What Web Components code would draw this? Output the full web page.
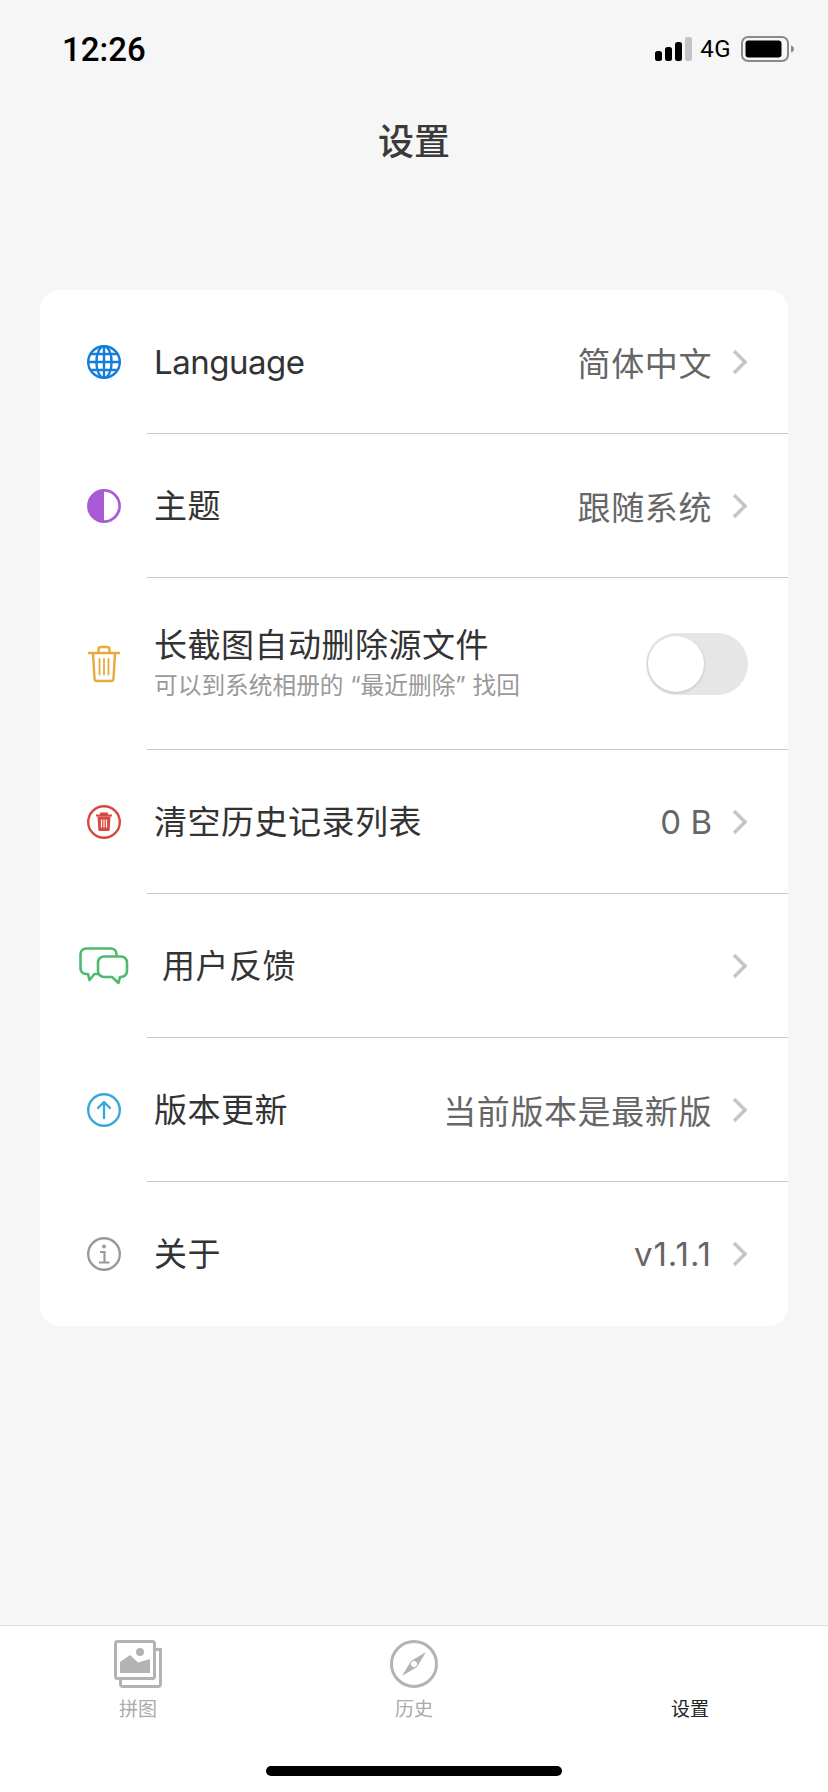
<!DOCTYPE html>
<html lang="zh">
<head>
<meta charset="utf-8">
<title>设置</title>
<style>
    html, body{
        margin: 0;
        background-color: #f6f6f7;
    }
    body{
        font-family: Inter, "Noto Sans CJK SC", sans-serif;
    }
</style>
</head>
<body>

<app-shell>
    <status-bar></status-bar>
    <page-title>设置</page-title>
    <settings-card>
        <setting-row label="Language" value="简体中文" chevron style="--label-spacing: -.5px">
            <svg slot="icon" width="36" height="36" viewBox="0 0 36 36" fill="none" stroke="#127fd8" stroke-width="2.4">
                <circle cx="18" cy="18" r="15.8"/>
                <ellipse cx="18" cy="18" rx="7.6" ry="15.8"/>
                <path d="M18 2v32M2.2 18h31.6M4.6 10h26.8M4.6 26h26.8"/>
            </svg>
        </setting-row>
        <setting-row label="主题" value="跟随系统" chevron>
            <svg slot="icon" width="36" height="36" viewBox="0 0 36 36">
                <circle cx="18" cy="18" r="15.6" fill="#fff" stroke="#a95bd6" stroke-width="2.6"/>
                <path d="M18 2a16 16 0 0 0 0 32z" fill="#a95bd6"/>
            </svg>
        </setting-row>
        <setting-row label="长截图自动删除源文件" sub="可以到系统相册的 “最近删除” 找回" tall>
            <svg slot="icon" width="34" height="38" viewBox="0 0 34 38" fill="none" stroke="#e9a93c" stroke-width="2.4" stroke-linecap="round" stroke-linejoin="round">
                <path d="M2 8h30M11.500 8V4.500a2.500 2.500 0 0 1 2.500-2.500h6a2.500 2.500 0 0 1 2.500 2.500V8"/>
                <path d="M6 8l1.500 25.500a2.500 2.500 0 0 0 2.500 2.500h14a2.500 2.500 0 0 0 2.500-2.500L28 8"/>
                <path d="M12.500 14v15.500M17 14v15.500M21.500 14v15.500" stroke-width="1.800"/>
            </svg>
            <toggle-switch slot="control"></toggle-switch>
        </setting-row>
        <setting-row label="清空历史记录列表" value="0 B" chevron style="--value-spacing: 0">
            <svg slot="icon" width="36" height="36" viewBox="0 0 36 36" fill="none">
                <circle cx="18" cy="18" r="15.800" stroke="#d8483f" stroke-width="2.400"/>
                <path d="M10 11.500h16M15 11.500V9.500h6v2" stroke="#d8483f" stroke-width="1.800"/>
                <path d="M11.500 12.500h13l-.8 13a1.500 1.500 0 0 1-1.500 1.500h-8.400a1.500 1.500 0 0 1-1.500-1.500z" fill="#d8483f"/>
                <path d="M15.500 15.500v8M18 15.500v8M20.500 15.500v8" stroke="#fff" stroke-width="1.200"/>
            </svg>
        </setting-row>
        <setting-row label="用户反馈" chevron indent>
            <svg slot="icon" width="50" height="38" viewBox="0 0 50 38" fill="none" stroke="#4dba6d" stroke-width="2.600" stroke-linejoin="round">
                <path d="M20 27H15.500L10.500 33 9 27H7a5.500 5.500 0 0 1-5.500-5.500V7A5.500 5.500 0 0 1 7 1.500H32A5.500 5.500 0 0 1 37.500 7V9.500"/>
                <path d="M25 9.500H42a6 6 0 0 1 6 6V24a6 6 0 0 1-6 6H41L39.500 36 33 30H25a6 6 0 0 1-6-6V15.500a6 6 0 0 1 6-6z"/>
            </svg>
        </setting-row>
        <setting-row label="版本更新" value="当前版本是最新版" chevron>
            <svg slot="icon" width="36" height="36" viewBox="0 0 36 36" fill="none" stroke="#3aa7da" stroke-width="2.400" stroke-linecap="round" stroke-linejoin="round">
                <circle cx="18" cy="18" r="15.800"/>
                <path d="M18 26V10.500M12 16l6-6 6 6"/>
            </svg>
        </setting-row>
        <setting-row label="关于" value="v1.1.1" chevron style="--value-spacing: 1px">
            <svg slot="icon" width="36" height="36" viewBox="0 0 36 36" fill="none" stroke="#999" stroke-width="2.400">
                <circle cx="18" cy="18" r="15.800"/>
                <circle cx="18" cy="10.500" r="1.900" fill="#999" stroke="none"/>
                <path d="M14 16h4.500v10M13 26.500h10.500" stroke-width="2.200"/>
            </svg>
        </setting-row>
    </settings-card>
    <tab-bar>
        <tab-item label="拼图">
            <svg width="48" height="48" viewBox="0 0 48 48" fill="none">
                <path d="M41 9.500h5.500V45a2 2 0 0 1-2 1.500H8.500a2 2 0 0 1-2-1.500V40" stroke="#b3b3b3" stroke-width="3"/>
                <rect x="1.500" y="1.500" width="39" height="37" rx="2" fill="#fff" stroke="#b3b3b3" stroke-width="3"/>
                <path d="M6 33V22L16 15l8 7.500L36 19V33z" fill="#b3b3b3"/>
                <circle cx="26" cy="12" r="4" fill="#b3b3b3"/>
            </svg>
        </tab-item>
        <tab-item label="历史">
            <svg width="48" height="48" viewBox="0 0 48 48" fill="none">
                <circle cx="24" cy="24" r="22.500" stroke="#b3b3b3" stroke-width="3"/>
                <path d="M36 12L27 27 12 36l9-15z" fill="#b3b3b3"/>
                <circle cx="24" cy="24" r="3" fill="#fff"/>
            </svg>
        </tab-item>
        <tab-item label="设置" active></tab-item>
    </tab-bar>
</app-shell>

<script>
const shellTemplate = document.createElement('template')
shellTemplate.innerHTML = `
    <style>
        :host{
            display: flex;
            flex-direction: column;
            height: 1792px;
            overflow: hidden;
        }
    </style>
    <slot></slot>
`

class AppShell extends HTMLElement {
    constructor(){
        super()
        this.attachShadow({mode: 'open'}).appendChild(shellTemplate.content.cloneNode(true))
    }
}

const statusTemplate = document.createElement('template')
statusTemplate.innerHTML = `
    <style>
        :host{
            display: flex;
            align-items: center;
            justify-content: space-between;
            height: 98px;
            padding: 0 34px 0 62px;
            box-sizing: border-box;
            color: #000;
            font-family: Roboto, sans-serif;
        }
        .time{
            font-size: 33px;
            font-weight: 500;
        }
        .right{
            display: flex;
            align-items: center;
        }
        .net{
            font-size: 24px;
            letter-spacing: .5px;
            margin: 0 10px 0 8px;
        }
        svg{
            display: block;
        }
    </style>
    <span class="time">12:26</span>
    <div class="right">
        <svg width="37" height="24" viewBox="0 0 37 24">
            <rect x="0" y="14" width="7" height="10" rx="2.500"/>
            <rect x="10" y="10" width="7" height="14" rx="2.500"/>
            <rect x="20" y="5" width="7" height="19" rx="2.500"/>
            <rect x="30" y="0" width="7" height="24" rx="2" fill="#c4c4c4"/>
        </svg>
        <span class="net">4G</span>
        <svg width="53" height="26" viewBox="0 0 53 26">
            <rect x="1" y="1" width="46" height="24" rx="6" fill="none" stroke="#8a8a8a" stroke-width="2"/>
            <rect x="4.500" y="4.500" width="36" height="17" rx="3"/>
            <path d="M50 9.500c2 .5 3 2 3 3.500s-1 3-3 3.500z" fill="#8a8a8a"/>
        </svg>
    </div>
`

class StatusBar extends HTMLElement {
    constructor(){
        super()
        this.attachShadow({mode: 'open'}).appendChild(statusTemplate.content.cloneNode(true))
    }
}

const titleTemplate = document.createElement('template')
titleTemplate.innerHTML = `
    <style>
        :host{
            display: flex;
            align-items: center;
            justify-content: center;
            height: 88px;
            padding-bottom: 7px;
            box-sizing: border-box;
            flex: none;
            color: #3a3a3a;
            font-size: 36px;
            font-weight: 500;
        }
    </style>
    <slot></slot>
`

class PageTitle extends HTMLElement {
    constructor(){
        super()
        this.attachShadow({mode: 'open'}).appendChild(titleTemplate.content.cloneNode(true))
    }
}

const cardTemplate = document.createElement('template')
cardTemplate.innerHTML = `
    <style>
        :host{
            display: block;
            margin: 104px 40px 0;
            background-color: #fff;
            border-radius: 20px;
            overflow: hidden;
        }
    </style>
    <slot></slot>
`

class SettingsCard extends HTMLElement {
    constructor(){
        super()
        this.attachShadow({mode: 'open'}).appendChild(cardTemplate.content.cloneNode(true))
    }
}

const rowTemplate = document.createElement('template')
rowTemplate.innerHTML = `
    <style>
        :host{
            display: flex;
            height: 144px;
            color: #333;
        }
        :host([tall]){
            height: 172px;
        }
        :host(:last-child) .main{
            border-bottom: none;
        }
        .icon{
            flex: none;
            width: 107px;
            padding-left: 24px;
            box-sizing: border-box;
        }
        .icon-box{
            display: flex;
            align-items: center;
            justify-content: center;
            width: 80px;
            height: 100%;
        }
        .main{
            flex: 1;
            display: flex;
            align-items: center;
            min-width: 0;
            padding: 0 40px 0 7px;
            border-bottom: 1px solid #c9c9cb;
        }
        :host([indent]) .text{
            padding-left: 8px;
        }
        .text{
            flex: 1;
            min-width: 0;
        }
        .label{
            font-size: 33px;
            line-height: 44px;
            letter-spacing: var(--label-spacing, .5px);
            white-space: nowrap;
        }
        .sub{
            font-size: 23.700px;
            line-height: 32px;
            color: #999;
            white-space: nowrap;
            margin-top: 3px;
            padding-bottom: 3px;
        }
        .value{
            font-size: 33px;
            color: #666;
            letter-spacing: var(--value-spacing, .6px);
            white-space: nowrap;
        }
        .chevron{
            display: block;
            flex: none;
            margin-left: 20px;
        }
    </style>
    <div class="icon"><div class="icon-box"><slot name="icon"></slot></div></div>
    <div class="main">
        <div class="text">
            <div class="label"></div>
        </div>
    </div>
`

class SettingRow extends HTMLElement {
    constructor(){
        super()
        this._shadowRoot = this.attachShadow({mode: 'open'})
        this._shadowRoot.appendChild(rowTemplate.content.cloneNode(true))

        this.$main = this._shadowRoot.querySelector('.main')
        this.$text = this._shadowRoot.querySelector('.text')
        this.$label = this._shadowRoot.querySelector('.label')
    }

    connectedCallback(){
        this.$label.textContent = this.getAttribute('label')

        if(this.hasAttribute('sub')){
            const sub = document.createElement('div')
            sub.className = 'sub'
            sub.textContent = this.getAttribute('sub')
            this.$text.appendChild(sub)
        }
        if(this.hasAttribute('value')){
            const value = document.createElement('span')
            value.className = 'value'
            value.textContent = this.getAttribute('value')
            this.$main.appendChild(value)
        }
        if(this.hasAttribute('chevron')){
            const tpl = document.createElement('template')
            tpl.innerHTML = `<svg class="chevron" width="16" height="26" viewBox="0 0 16 26" fill="none" stroke="#c6c6c8" stroke-width="3.600"><path d="M2 2l11 11L2 24"/></svg>`
            this.$main.appendChild(tpl.content)
        }
        const control = document.createElement('slot')
        control.name = 'control'
        this.$main.appendChild(control)
    }
}

const toggleTemplate = document.createElement('template')
toggleTemplate.innerHTML = `
    <style>
        :host{
            display: block;
            width: 102px;
            height: 62px;
            border-radius: 31px;
            background-color: #e6e6e7;
            position: relative;
        }
        .knob{
            position: absolute;
            left: 2px;
            top: 3px;
            width: 56px;
            height: 56px;
            border-radius: 50%;
            background-color: #fff;
            box-shadow: 0 1px 3px rgba(0, 0, 0, .18);
        }
    </style>
    <div class="knob"></div>
`

class ToggleSwitch extends HTMLElement {
    constructor(){
        super()
        this.attachShadow({mode: 'open'}).appendChild(toggleTemplate.content.cloneNode(true))
    }
}

const tabBarTemplate = document.createElement('template')
tabBarTemplate.innerHTML = `
    <style>
        :host{
            display: block;
            margin-top: auto;
            height: 167px;
            box-sizing: border-box;
            background-color: #fff;
            border-top: 1px solid #dcdcdc;
        }
        .tabs{
            display: grid;
            grid-template-columns: repeat(3, 1fr);
            height: 118px;
        }
        .home{
            width: 296px;
            height: 10px;
            margin: 22px auto 0;
            border-radius: 5px;
            background-color: #000;
        }
    </style>
    <div class="tabs"><slot></slot></div>
    <div class="home"></div>
`

class TabBar extends HTMLElement {
    constructor(){
        super()
        this.attachShadow({mode: 'open'}).appendChild(tabBarTemplate.content.cloneNode(true))
    }
}

const tabItemTemplate = document.createElement('template')
tabItemTemplate.innerHTML = `
    <style>
        :host{
            display: flex;
            flex-direction: column;
            align-items: center;
            padding-top: 14px;
            color: #aaa;
        }
        :host([active]){
            color: #222;
        }
        .glyph{
            height: 48px;
        }
        .label{
            font-size: 19px;
            line-height: 26px;
            margin-top: 9px;
        }
    </style>
    <div class="glyph"><slot></slot></div>
    <div class="label"></div>
`

class TabItem extends HTMLElement {
    constructor(){
        super()
        this.attachShadow({mode: 'open'}).appendChild(tabItemTemplate.content.cloneNode(true))
    }

    connectedCallback(){
        this.shadowRoot.querySelector('.label').textContent = this.getAttribute('label')
    }
}

customElements.define('app-shell', AppShell)
customElements.define('status-bar', StatusBar)
customElements.define('page-title', PageTitle)
customElements.define('settings-card', SettingsCard)
customElements.define('setting-row', SettingRow)
customElements.define('toggle-switch', ToggleSwitch)
customElements.define('tab-bar', TabBar)
customElements.define('tab-item', TabItem)
</script>
</body>
</html>
